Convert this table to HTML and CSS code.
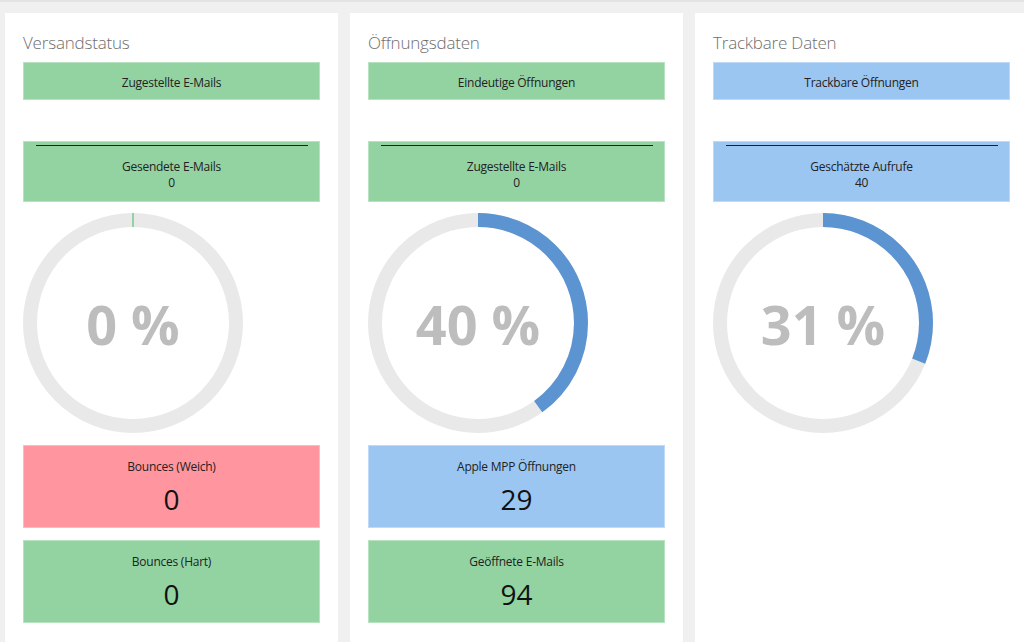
FILE: index.html
```html
<!DOCTYPE html>
<html lang="de">
<head>
<meta charset="utf-8">
<title>Dashboard</title>
<link rel="stylesheet" href="styles.css">
</head>
<body>
<div class="topbar"></div>
<main class="dashboard">
  <section class="card">
    <h2 class="card-title">Versandstatus</h2>
    <div class="tile tile-green tile-head">Zugestellte E-Mails</div>
    <div class="tile tile-green tile-sub">
      <div class="rule"></div>
      <div class="sub-label">Gesendete E-Mails</div>
      <div class="sub-value">0</div>
    </div>
    <div class="ring">
      <svg class="ring-svg" viewBox="0 0 220 220" width="220" height="220">
        <circle class="ring-track" cx="110" cy="110" r="103"></circle>
        <line class="ring-tick" x1="110" y1="0" x2="110" y2="14"></line>
        <text class="ring-text" x="110" y="111">0 %</text>
      </svg>
    </div>
    <div class="tile tile-red tile-stat">
      <div class="stat-label">Bounces (Weich)</div>
      <div class="stat-value">0</div>
    </div>
    <div class="tile tile-green tile-stat">
      <div class="stat-label">Bounces (Hart)</div>
      <div class="stat-value">0</div>
    </div>
  </section>

  <section class="card">
    <h2 class="card-title">Öffnungsdaten</h2>
    <div class="tile tile-green tile-head">Eindeutige Öffnungen</div>
    <div class="tile tile-green tile-sub">
      <div class="rule"></div>
      <div class="sub-label">Zugestellte E-Mails</div>
      <div class="sub-value">0</div>
    </div>
    <div class="ring">
      <svg class="ring-svg" viewBox="0 0 220 220" width="220" height="220">
        <circle class="ring-track" cx="110" cy="110" r="103"></circle>
        <circle class="ring-arc" cx="110" cy="110" r="103" stroke-dasharray="258.9 647.2" transform="rotate(-90 110 110)"></circle>
        <text class="ring-text" x="110" y="111">40 %</text>
      </svg>
    </div>
    <div class="tile tile-blue tile-stat">
      <div class="stat-label">Apple MPP Öffnungen</div>
      <div class="stat-value">29</div>
    </div>
    <div class="tile tile-green tile-stat">
      <div class="stat-label">Geöffnete E-Mails</div>
      <div class="stat-value">94</div>
    </div>
  </section>

  <section class="card">
    <h2 class="card-title">Trackbare Daten</h2>
    <div class="tile tile-blue tile-head">Trackbare Öffnungen</div>
    <div class="tile tile-blue tile-sub">
      <div class="rule"></div>
      <div class="sub-label">Geschätzte Aufrufe</div>
      <div class="sub-value">40</div>
    </div>
    <div class="ring">
      <svg class="ring-svg" viewBox="0 0 220 220" width="220" height="220">
        <circle class="ring-track" cx="110" cy="110" r="103"></circle>
        <circle class="ring-arc" cx="110" cy="110" r="103" stroke-dasharray="200.6 647.2" transform="rotate(-90 110 110)"></circle>
        <text class="ring-text" x="110" y="111">31 %</text>
      </svg>
    </div>
  </section>
</main>
</body>
</html>
```
FILE: styles.css
```css
html, body {
  margin: 0;
  padding: 0;
  height: 100%;
  overflow: hidden;
}
body {
  background: #f0f0f0;
  font-family: "Open Sans", "Noto Sans", "Liberation Sans", sans-serif;
  color: #222;
}
.topbar {
  height: 2px;
  background: #e3e3e3;
}
.dashboard {
  display: flex;
  gap: 12px;
  padding: 11px 0 0 5px;
  height: 660px;
  box-sizing: border-box;
}
.card {
  flex: 0 0 333px;
  box-sizing: border-box;
  background: #fff;
  padding: 18px 18px 18px 18px;
  display: flex;
  flex-direction: column;
}
.card-title {
  margin: 0;
  font-size: 17px;
  line-height: 24px;
  font-weight: 300;
  color: #6e6e6e;
  letter-spacing: -0.2px;
}
.tile {
  box-sizing: border-box;
  border: 1px solid rgba(255, 255, 255, 0.35);
  text-align: center;
  font-size: 12px;
  letter-spacing: -0.25px;
  color: #222;
}
.tile-green { background: #93d3a2; }
.tile-red { background: #ff959e; }
.tile-blue { background: #9bc6f1; }
.tile-head {
  margin-top: 7px;
  height: 38px;
  padding-top: 3px;
  line-height: 34px;
}
.tile-sub {
  margin-top: 41px;
  height: 61px;
  padding-top: 3px;
}
.rule {
  height: 1px;
  background: #1e1e1e;
  margin: 0 11px 0 12px;
}
.sub-label {
  margin-top: 13px;
  line-height: 16px;
}
.sub-value {
  line-height: 16px;
}
.ring {
  margin-top: 11px;
  height: 220px;
  display: flex;
}
.ring-svg {
  display: block;
}
.ring-track {
  fill: none;
  stroke: #e9e9e9;
  stroke-width: 14;
}
.ring-arc {
  fill: none;
  stroke: #5b94d0;
  stroke-width: 14;
}
.ring-tick {
  stroke: #93d3a2;
  stroke-width: 2;
}
.ring-text {
  font-family: "Open Sans", "Liberation Sans", sans-serif;
  font-weight: 700;
  font-size: 54px;
  fill: #bdbdbd;
  text-anchor: middle;
  dominant-baseline: central;
}
.tile-stat {
  margin-top: 12px;
  height: 83px;
  padding-top: 13px;
}
.stat-label {
  line-height: 16px;
}
.stat-value {
  margin-top: 8px;
  font-size: 28px;
  line-height: 32px;
  letter-spacing: 0;
  color: #111;
}
```
